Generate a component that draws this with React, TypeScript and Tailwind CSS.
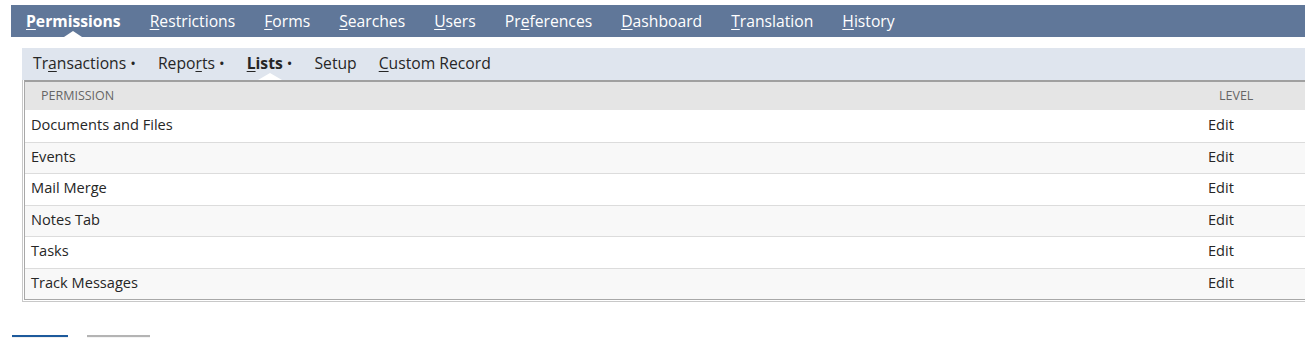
import React from "react";

const U = ({ t, i }: { t: string; i: number }) => (
  <>
    {t.slice(0, i)}
    <span className="underline underline-offset-2">{t[i]}</span>
    {t.slice(i + 1)}
  </>
);

const top: [string, number][] = [
  ["Permissions", 0],
  ["Restrictions", 0],
  ["Forms", 0],
  ["Searches", 0],
  ["Users", 0],
  ["Preferences", 2],
  ["Dashboard", 0],
  ["Translation", 0],
  ["History", 0],
];

const rows = ["Documents and Files", "Events", "Mail Merge", "Notes Tab", "Tasks", "Track Messages"];

export default function App() {
  return (
    <div className="w-[1305px] h-[338px] overflow-hidden bg-white text-[#262626]" style={{ fontFamily: '"Open Sans", sans-serif' }}>
      <div className="pt-[5px] pl-[11px]">
        <div className="h-[32px] bg-[#607799] flex items-center pl-[15px] gap-[29px] text-[15.7px] text-white">
          {top.map(([t, i], k) => (
            <div key={t} className={`relative h-full flex items-center pt-[1px] ${k === 0 ? "font-bold" : ""}`}>
              <span><U t={t} i={i} /></span>
              {k === 0 && (
                <div className="absolute bottom-0 left-1/2 -translate-x-1/2 w-0 h-0 border-l-[9px] border-r-[9px] border-b-[6px] border-l-transparent border-r-transparent border-b-white" />
              )}
            </div>
          ))}
        </div>
      </div>
      <div className="mt-[11px] ml-[22px]">
        <div className="h-[32px] bg-[#dfe5ee] flex items-center pl-[11px] pb-[1px] text-[15.7px] text-[#262626]">
          <span className="mr-[22px]"><U t="Transactions" i={2} /> <span className="text-[15px]">•</span></span>
          <span className="mr-[22px]"><U t="Reports" i={4} /> <span className="text-[15px]">•</span></span>
          <span className="relative h-full flex items-center mr-[22px] font-bold">
            <span><U t="Lists" i={0} /> <span className="text-[15px] font-normal">•</span></span>
            <div className="absolute -bottom-[1px] left-[11px] w-0 h-0 border-l-[12px] border-r-[12px] border-b-[7px] border-l-transparent border-r-transparent border-b-white" />
          </span>
          <span className="mr-[22px]">Setup</span>
          <span><U t="Custom Record" i={0} /></span>
        </div>
        <div className="border-l border-b border-[#c8c8c8] pl-px pb-px">
          <div className="border-l border-b border-[#a8a8a8] border-t-2 border-t-[#a0a0a0]">
            <div className="h-[28px] bg-[#e5e5e5] flex items-center pt-[1px] text-[12.5px] text-[#666] uppercase">
              <div className="flex-1 pl-[16px]">Permission</div>
              <div className="w-[111px] pl-[25px]">Level</div>
            </div>
            {rows.map((r, k) => (
              <div key={r} className={`h-[31.5px] flex items-center pb-[2px] text-[14.6px] ${k % 2 === 0 ? "bg-white" : "bg-[#f8f8f8]"} ${k > 0 ? "border-t border-[#dcdcdc]" : ""}`}>
                <div className="flex-1 pl-[6px]">{r}</div>
                <div className="w-[111px] pl-[14px]">Edit</div>
              </div>
            ))}
          </div>
        </div>
      </div>
      <div className="mt-[33px] flex gap-[19px] pl-[12px]">
        <div className="w-[56px] h-[4px] border-t-2 border-[#1d5a9c] bg-[#f0f0f0]" />
        <div className="w-[63px] h-[4px] border-t-2 border-[#b4b4b4] bg-[#f4f4f4]" />
      </div>
    </div>
  );
}
